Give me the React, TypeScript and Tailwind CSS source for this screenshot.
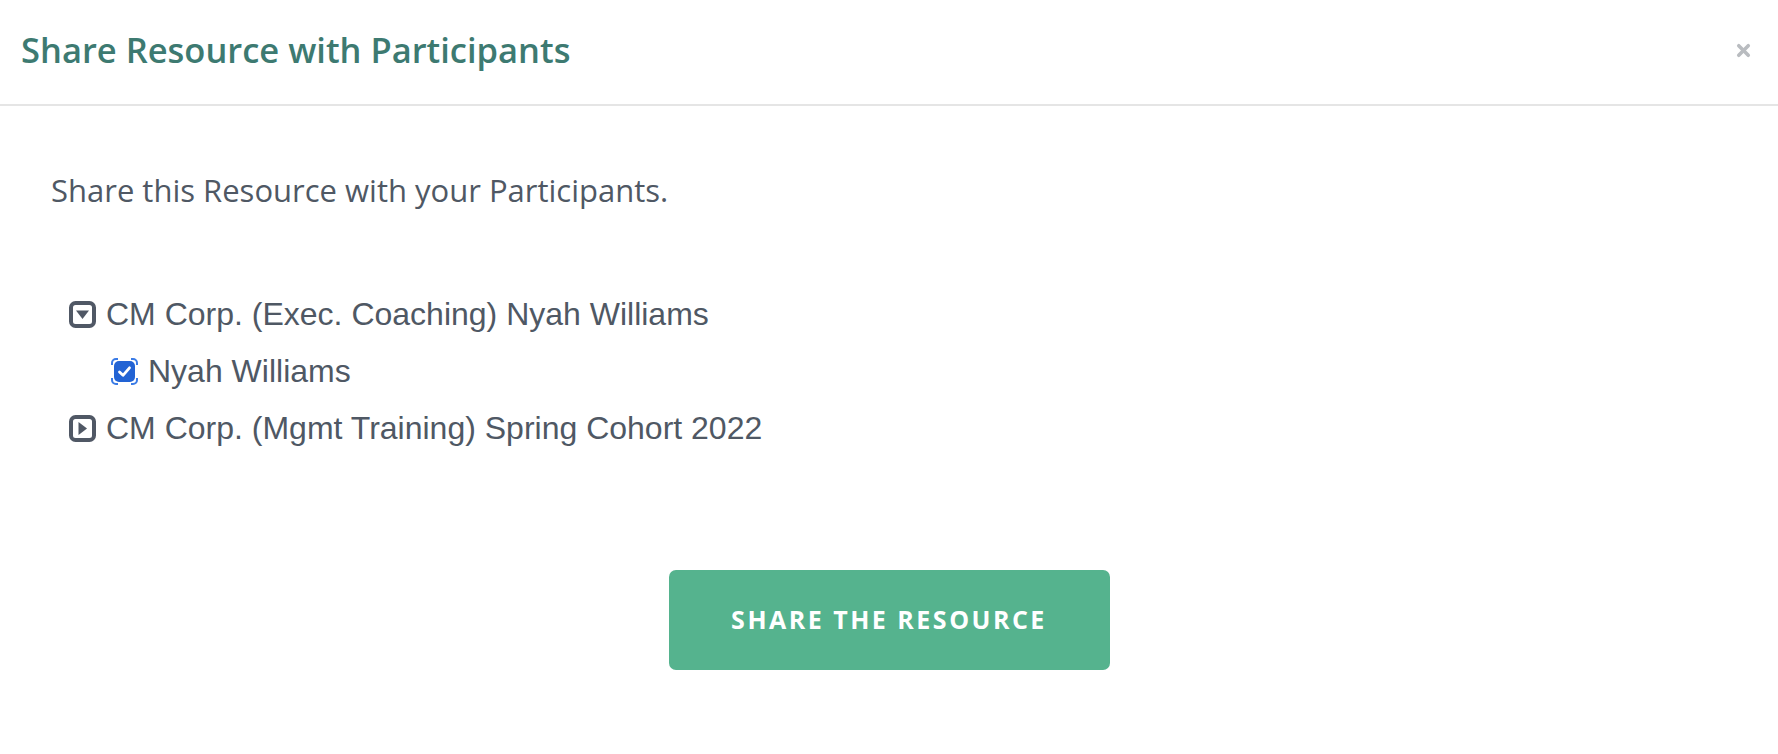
import { X } from 'lucide-react';

const ubuntuish = { fontFamily: '"Open Sans", "Noto Sans", sans-serif' };

function CaretBox({ open }: { open: boolean }) {
  return (
    <svg width="27" height="27" viewBox="0 0 27 27" className="shrink-0">
      <rect x="2" y="2" width="23" height="23" rx="4.5" fill="none" stroke="#505865" strokeWidth="4" />
      {open ? (
        <path d="M7 9.5 L20 9.5 L13.5 18 Z" fill="#505865" />
      ) : (
        <path d="M9.5 7 L18 13.5 L9.5 20 Z" fill="#505865" />
      )}
    </svg>
  );
}

function CheckMark() {
  // checked box with the clipped focus ring showing at its corners
  return (
    <svg width="27" height="27" viewBox="0 0 27 27" className="shrink-0">
      <g fill="none" stroke="#3a7be6" strokeWidth="2">
        <path d="M1 7 V5 A4 4 0 0 1 5 1 H7" />
        <path d="M20 1 H22 A4 4 0 0 1 26 5 V7" />
        <path d="M26 20 V22 A4 4 0 0 1 22 26 H20" />
        <path d="M7 26 H5 A4 4 0 0 1 1 22 V20" />
      </g>
      <rect x="3" y="3" width="21" height="21" rx="5" fill="#2263d4" />
      <path d="M8.5 14 L12 17.3 L18.5 9.8" fill="none" stroke="#fff" strokeWidth="2.8" strokeLinecap="round" strokeLinejoin="round" />
    </svg>
  );
}

const groups = [
  { name: 'CM Corp. (Exec. Coaching) Nyah Williams', open: true, members: ['Nyah Williams'] },
  { name: 'CM Corp. (Mgmt Training) Spring Cohort 2022', open: false, members: [] as string[] },
];

export default function App() {
  return (
    <div className="min-h-screen w-full bg-white">
      {/* modal header */}
      <div className="flex h-[106px] items-center justify-between border-b-2 border-[#e5e5e5] pb-[4px] pl-[21px] pr-[25px]">
        <h2 className="text-[34.5px] font-semibold text-[#3d7a71]" style={ubuntuish}>
          Share Resource with Participants
        </h2>
        <X className="h-[19px] w-[19px] text-[#b9bcc0]" strokeWidth={4.5} />
      </div>

      {/* modal body */}
      <div className="px-[51px] pt-[61px]">
        <p className="text-[31px] text-[#4f5864]" style={ubuntuish}>
          Share this Resource with your Participants.
        </p>

        <ul className="mt-[72px] pl-[18px] font-['Liberation_Sans',Arial,sans-serif] text-[32px] text-[#4f5864]">
          {groups.map((g) => (
            <li key={g.name}>
              <div className="flex h-[57px] items-center gap-[10px]">
                <CaretBox open={g.open} />
                <span>{g.name}</span>
              </div>
              {g.open &&
                g.members.map((m) => (
                  <div key={m} className="flex h-[57px] items-center gap-[10px] pl-[42px]">
                    <CheckMark />
                    <span>{m}</span>
                  </div>
                ))}
            </li>
          ))}
        </ul>

        <div className="mt-[113px] flex justify-center">
          <button
            className="h-[100px] w-[441px] rounded-[7px] bg-[#55b38e] text-[25px] font-bold uppercase tracking-[2.5px] text-white"
            style={ubuntuish}
          >
            Share the Resource
          </button>
        </div>
      </div>
    </div>
  );
}
